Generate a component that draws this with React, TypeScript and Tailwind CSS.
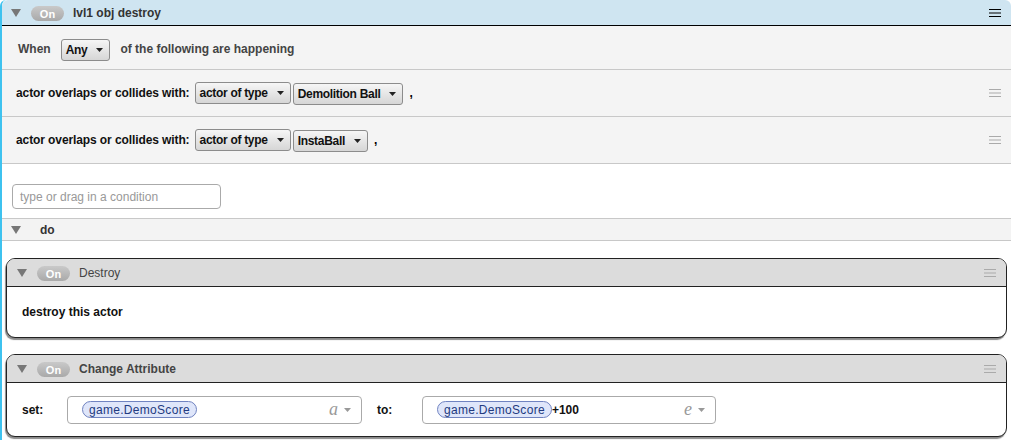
const Tri = ({ className = "" }: { className?: string }) => (
  <svg width="10" height="8" viewBox="0 0 10 8" className={className}>
    <path d="M0 0 L10 0 L5 8 Z" fill="#777" />
  </svg>
);

const Arrow = ({ color = "#222" }: { color?: string }) => (
  <svg width="7" height="4" viewBox="0 0 7 4">
    <path d="M0 0 L7 0 L3.5 4 Z" fill={color} />
  </svg>
);

const Pill = () => (
  <span className="inline-flex h-[15px] w-[33px] items-center justify-center rounded-full bg-gradient-to-b from-[#c9c9c9] to-[#a9a9a9] text-[11px] font-bold text-white">
    On
  </span>
);

const Burger = ({ dark = false }: { dark?: boolean }) => (
  <svg width="12" height="8" viewBox="0 0 12 8">
    <g stroke={dark ? "#000" : "#aaa"} strokeWidth="1">
      <line x1="0" y1="0.5" x2="12" y2="0.5" />
      <line x1="0" y1="4" x2="12" y2="4" />
      <line x1="0" y1="7.5" x2="12" y2="7.5" />
    </g>
  </svg>
);

const Select = ({ label }: { label: string }) => (
  <span className="inline-flex h-[22px] items-center gap-[9px] whitespace-nowrap rounded-[3px] border border-[#8c8c8c] bg-gradient-to-b from-[#f6f6f6] to-[#d6d6d6] pl-[4px] pr-[6px] text-[12px] font-bold tracking-[-0.3px] text-[#111]">
    {label}
    <Arrow />
  </span>
);

const Chip = () => (
  <span className="inline-flex h-[17px] items-center whitespace-nowrap rounded-full border border-[#7083c0] bg-[#dfe6fa] px-[6px] text-[12px] tracking-[0.3px] text-[#223a80]">
    game.DemoScore
  </span>
);

const Condition = ({ target }: { target: string }) => (
  <div className="flex h-[47px] items-center border-b border-[#c8c8c8] bg-[#f4f4f4] pl-[14px] pr-[10px]">
    <span className="mr-[5px] whitespace-nowrap text-[12px] font-bold tracking-[-0.1px] text-[#111]">
      actor overlaps or collides with:
    </span>
    <Select label="actor of type" />
    <span className="ml-[2px]">
      <Select label={target} />
    </span>
    <span className="ml-[6px] text-[12px] font-bold">,</span>
    <span className="ml-auto">
      <Burger />
    </span>
  </div>
);

const Card = ({ title, bold, children }: { title: string; bold?: boolean; children: React.ReactNode }) => (
  <div className="mx-[4px] overflow-hidden rounded-[9px] border border-[#222] bg-white shadow-[-1px_2px_1px_#8a8a8a]">
    <div className="flex h-[28px] items-center border-b border-[#222] bg-[#dcdcdc] pl-[10px] pr-[10px]">
      <Tri />
      <span className="ml-[10px]">
        <Pill />
      </span>
      <span className={`ml-[9px] text-[12px] text-[#444] ${bold ? "font-bold" : ""}`}>{title}</span>
      <span className="ml-auto">
        <Burger />
      </span>
    </div>
    {children}
  </div>
);

export default function App() {
  return (
    <div className="h-[440px] w-[1011px] overflow-hidden bg-white font-['Liberation_Sans',Arial,sans-serif]">
      <div className="min-h-full rounded-tl-[6px] rounded-tr-[6px] border-l-2 border-[#3ec2ef] bg-white">
        <div className="flex h-[26px] items-center rounded-tl-[6px] rounded-tr-[6px] border-b border-black bg-[#cfe5f1] pl-[9px] pr-[10px]">
          <Tri />
          <span className="ml-[10px]">
            <Pill />
          </span>
          <span className="ml-[9px] text-[12px] font-bold text-[#333]">lvl1 obj destroy</span>
          <span className="ml-auto">
            <Burger dark />
          </span>
        </div>
        <div className="flex h-[44px] items-center border-b border-[#c8c8c8] bg-[#f4f4f4] pl-[16px] pt-[2px]">
          <span className="text-[12px] font-bold text-[#444]">When</span>
          <span className="ml-[10px]">
            <Select label="Any" />
          </span>
          <span className="ml-[10px] text-[12px] font-bold text-[#444]">of the following are happening</span>
        </div>
        <Condition target="Demolition Ball" />
        <Condition target="InstaBall" />
        <div className="flex h-[54px] items-start pl-[10px] pt-[20px]">
          <div className="flex h-[25px] w-[209px] items-center rounded-[4px] border border-[#aaa] bg-white pl-[7px] text-[12px] text-[#999]">
            type or drag in a condition
          </div>
        </div>
        <div className="flex h-[23px] items-center border-y border-[#c8c8c8] bg-[#f3f3f3] pl-[9px]">
          <Tri />
          <span className="ml-[19px] text-[12px] font-bold text-[#333]">do</span>
        </div>
        <div className="flex flex-col gap-[16px] pt-[17px]">
          <Card title="Destroy">
            <div className="flex h-[50px] items-center pl-[15px] text-[12px] font-bold text-[#111]">destroy this actor</div>
          </Card>
          <Card title="Change Attribute" bold>
            <div className="flex h-[53px] items-center pl-[15px] text-[12px]">
              <span className="w-[45px] font-bold text-[#111]">set:</span>
              <div className="flex h-[28px] w-[295px] items-center rounded-[4px] border border-[#aaa] bg-white pl-[14px] pr-[10px]">
                <Chip />
                <span className="ml-auto font-['Liberation_Serif',serif] text-[18px] italic text-[#999]">a</span>
                <span className="ml-[6px]">
                  <Arrow color="#999" />
                </span>
              </div>
              <span className="ml-[15px] w-[45px] font-bold text-[#111]">to:</span>
              <div className="flex h-[28px] w-[294px] items-center rounded-[4px] border border-[#aaa] bg-white pl-[14px] pr-[10px]">
                <Chip />
                <span className="font-bold text-[#111]">+100</span>
                <span className="ml-auto font-['Liberation_Serif',serif] text-[18px] italic text-[#999]">e</span>
                <span className="ml-[6px]">
                  <Arrow color="#999" />
                </span>
              </div>
            </div>
          </Card>
        </div>
      </div>
    </div>
  );
}
